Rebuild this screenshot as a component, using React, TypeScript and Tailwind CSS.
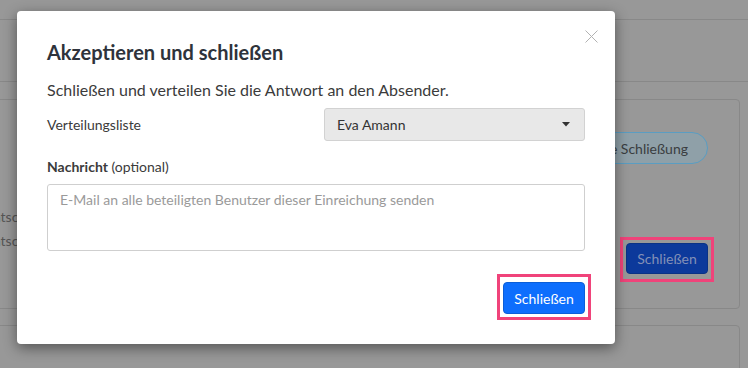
import React from "react";

export default function App() {
  return (
    <div
      className="relative w-[748px] h-[368px] overflow-hidden bg-[#989898] text-[#333]"
      style={{ fontFamily: "Lato, 'Open Sans', sans-serif" }}
    >
      {/* Background page (dimmed) */}
      <div className="flex flex-col">
        <div className="h-[20px] border-b border-[#888]" />
        <div className="h-[62px] border-b border-[#888]" />
        <div className="pt-[17px] pr-[8px]">
          <div className="ml-[-24px] h-[210px] border border-[#888] rounded-[4px] flex flex-col">
            <div className="flex justify-end pt-[32px] pr-[31px]">
              <div className="h-[32px] px-[19px] rounded-full border border-[#5a9dc2] bg-[#8fa0a8] text-[#3a3d40] text-[14px] flex items-center">
                Bedingte Schließung
              </div>
            </div>
            <div className="flex pl-[8px] pr-[31px] pt-[38px]">
              <div className="flex flex-col text-[14px] leading-[24px] text-[#555] pt-[3px]">
                <span>Entscheidung</span>
                <span>Entscheidung</span>
              </div>
              <div className="flex-1" />
              <div className="relative mt-[41px] h-[31px] w-[82px] rounded-[4px] bg-[#0c399b] border border-[#0a3285] text-[#8390b7] text-[14px] flex items-center justify-center">
                Schließen
                <span className="absolute -left-[7px] -right-[7px] -top-[7px] -bottom-[9px] border-[3px] border-[#f0437a]" />
              </div>
            </div>
          </div>
          <div className="mt-[16px] ml-[-24px] h-[60px] border border-[#888] rounded-[4px]" />
        </div>
      </div>

      {/* Modal */}
      <div className="absolute left-[17px] top-[11px] w-[598px] h-[333px] bg-white rounded-[4px] shadow-[0_4px_14px_rgba(0,0,0,0.45)] px-[30px] flex flex-col">
        <button className="absolute left-[568px] top-[19px] w-[13px] h-[13px]" aria-label="close">
          <svg width="13" height="13" viewBox="0 0 13 13">
            <path d="M0.5 0.5 L12.5 12.5 M12.5 0.5 L0.5 12.5" stroke="#b2b2b2" strokeWidth="1" fill="none" />
          </svg>
        </button>
        <h2 className="mt-[29px] text-[20px] leading-[24px] font-bold text-[#2e333b]">
          Akzeptieren und schließen
        </h2>
        <p className="mt-[14px] text-[16px] leading-[24px] text-[#3b3b3b]">
          Schließen und verteilen Sie die Antwort an den Absender.
        </p>
        <div className="mt-[6px] flex items-center justify-between">
          <span className="text-[14px] leading-[20px] text-[#3b3b3b]">Verteilungsliste</span>
          <div className="w-[261px] h-[33px] rounded-[3px] bg-[#e8e8e8] border border-[#d2d2d2] pl-[12px] pr-[14px] flex items-center justify-between text-[14px] text-[#333]">
            <span>Eva Amann</span>
            <svg width="8" height="5" viewBox="0 0 8 5">
              <path d="M0 0 L8 0 L4 4.5 Z" fill="#333" />
            </svg>
          </div>
        </div>
        <div className="mt-[16px] text-[14px] leading-[20px] text-[#3b3b3b]">
          <span className="font-bold">Nachricht</span> (optional)
        </div>
        <div className="mt-[7px] h-[67px] rounded-[3px] border border-[#cfcfcf] px-[12px] pt-[5px] text-[14px] leading-[20px] text-[#9a9a9a]">
          E-Mail an alle beteiligten Benutzer dieser Einreichung senden
        </div>
        <div className="mt-[31px] flex justify-end">
          <button className="relative w-[82px] h-[32px] rounded-[4px] bg-[#0d6efd] border border-[#0b5ed7] text-white text-[14px] flex items-center justify-center">
            Schließen
            <span className="absolute -left-[7px] -right-[7px] -top-[9px] -bottom-[7px] border-[3px] border-[#f0437a]" />
          </button>
        </div>
      </div>
    </div>
  );
}
